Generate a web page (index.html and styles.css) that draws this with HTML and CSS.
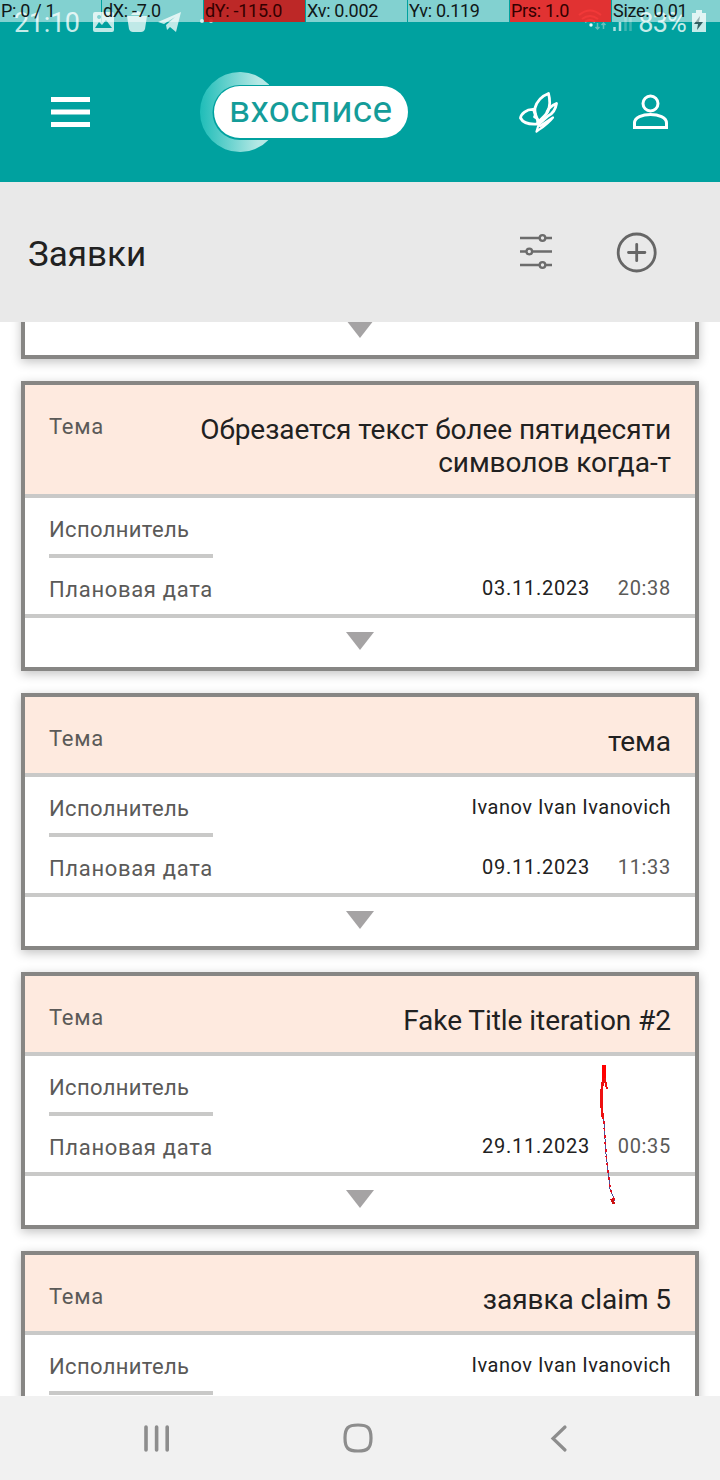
FILE: index.html
```html
<!DOCTYPE html>
<html lang="ru">
<head>
<meta charset="utf-8">
<title>Заявки</title>
<link rel="stylesheet" href="styles.css">
</head>
<body>
<div class="screen">
  <header class="top">
    <div class="status">
      <span class="clock">21:10</span>
      <svg class="status-left" width="130" height="40" viewBox="0 0 130 40" fill="#c0e9e7">
        <path fill-rule="evenodd" d="M5 12h17q2 0 2 2v16q0 2-2 2H5q-2 0-2-2V14q0-2 2-2zM5 28h17l-6-8-4 5-3-3zM9 15a2 2 0 1 0 .1 0z"/>
        <path d="M37 16h20l-2 13q-1 3-4 3h-8q-3 0-4-3zM41 15q6-8 12 0z"/>
        <path d="M68 22l23-10-5 20-6-5-3 3-1-5 9-8-11 7z"/>
        <circle cx="112" cy="21" r="2"/><circle cx="121" cy="21" r="2"/>
      </svg>
      <svg class="status-right" width="56" height="40" viewBox="0 0 56 40" fill="none" stroke="#ace0df" stroke-width="2.5">
        <path d="M2 15q11-9 22 0M5 19q8-6 16 0M8 22q5-4 10 0" stroke-width="2"/><circle cx="14" cy="25" r="1.7" fill="#e5ffff" stroke="none"/>
        <path d="M20.500 23v6m-2-2 2 2 2-2M26.500 29v-6m-2 2 2-2 2 2" stroke="#65c1bd" stroke-width="1.500"/>
        <path d="M37.500 31v-4M43 31v-9"/><path d="M48.500 31V16M53.500 31V12" stroke="#40b5b2"/>
      </svg>
      <span class="percent">83%</span>
      <svg class="battery" width="16" height="40" viewBox="0 0 16 40"><path d="M1 13h4v-3h6v3h4v19H1z" fill="#c5ebe9"/><path d="M9 16l-6 8h4l-1 6 6-8H8z" fill="#315f61"/></svg>
    </div>
    <div class="pointer-bar">
      <span class="cell">P: 0 / 1</span><span class="cell">dX: -7.0</span><span class="cell cell-dark">dY: -115.0</span><span class="cell">Xv: 0.002</span><span class="cell">Yv: 0.119</span><span class="cell cell-red">Prs: 1.0</span><span class="cell cell-last">Size: 0.01</span>
    </div>
    <nav class="appbar">
      <svg class="menu" width="40" height="32" viewBox="0 0 40 32" fill="#fff"><path d="M1 1h39v5H1zM1 13.500h39v5H1zM1 26h39v5H1z"/></svg>
      <svg class="logo" width="210" height="82" viewBox="0 0 210 82">
        <defs><linearGradient id="ring"><stop offset="0" stop-color="#1ebdb8"/><stop offset=".85" stop-color="#b5e8e5"/></linearGradient></defs>
        <path d="M69 13.500A40 40 0 1 0 69 68.500z" fill="url(#ring)"/>
        <rect x="12.500" y="14" width="190" height="55" rx="27.500" fill="#00a19f"/>
        <rect x="14" y="15" width="194" height="52" rx="26" fill="#fff"/>
        <text class="logo-text" x="29" y="51" textLength="163">вхосписе</text>
      </svg>
      <svg class="butterfly" width="42" height="44" viewBox="0 0 42 44" fill="none" stroke="#fff" stroke-width="2.800" stroke-linejoin="round" stroke-linecap="round">
        <path d="M20 32C20 29 16 24 17 18C19 11 24 6 30.500 3.500C32 9 32 16 30 21C28 25 25 28 20 32"/>
        <path d="M16 19.500C8 19 3 24 2.500 28C5 33 11 34.500 19 34C21 31 20 28 16.500 27C19 24 15 23 16 19.500"/>
        <path d="M29 22C31 17 35 15 38.500 13.500C37.500 20 34 24 30 26L21 34"/>
        <path d="M20 33L22 36L35 27.500C30 34 25 37 18.500 41.500L20.500 35" stroke-width="2.200"/>
      </svg>
      <svg class="person" width="38" height="38" viewBox="0 0 38 38" fill="none" stroke="#fff" stroke-width="3"><circle cx="18.500" cy="10.500" r="7.500"/><path d="M2.500 34.500V30C2.500 18.500 34.500 18.500 34.500 30v4.500z"/></svg>
    </nav>
  </header>
  <div class="titlebar">
    <h1 class="page-title">Заявки</h1>
    <svg class="filters" width="34" height="40" viewBox="0 0 34 40" fill="#e9e9e9" stroke="#6c6c6c"><path d="M1 6h32M1 19.500h32M1 33h32" stroke-width="2.500"/><g stroke-width="2.300"><circle cx="23.500" cy="6" r="2.800"/><circle cx="10.300" cy="19.500" r="2.800"/><circle cx="23.500" cy="33" r="2.800"/></g></svg>
    <svg class="add" width="42" height="40" viewBox="0 0 42 40" fill="none" stroke="#666" stroke-width="2.800"><circle cx="20.700" cy="20.500" r="18.500"/><path d="M20.700 12.300v16.400M12.500 20.500h16.400" stroke-linecap="round"/></svg>
  </div>
  <main class="list">
    <article class="card card-cut"><div class="expand"></div></article>
    <article class="card">
      <div class="subject"><span class="label topic">Тема</span><h2 class="subject-text">Обрезается текст более пятидесяти символов когда-т</h2></div>
      <div class="row"><span class="label">Исполнитель</span></div>
      <div class="rule"></div>
      <div class="row"><span class="label planned">Плановая дата</span><span class="value">03.11.2023</span><span class="time">20:38</span></div>
      <div class="expand"></div>
    </article>
    <article class="card">
      <div class="subject"><span class="label topic">Тема</span><h2 class="subject-text">тема</h2></div>
      <div class="row"><span class="label">Исполнитель</span><span class="value name">Ivanov Ivan Ivanovich</span></div>
      <div class="rule"></div>
      <div class="row"><span class="label planned">Плановая дата</span><span class="value">09.11.2023</span><span class="time">11:33</span></div>
      <div class="expand"></div>
    </article>
    <article class="card">
      <div class="subject"><span class="label topic">Тема</span><h2 class="subject-text">Fake Title iteration #2</h2></div>
      <div class="row"><span class="label">Исполнитель</span></div>
      <div class="rule"></div>
      <div class="row"><span class="label planned">Плановая дата</span><span class="value">29.11.2023</span><span class="time">00:35</span></div>
      <div class="expand"></div>
    </article>
    <article class="card">
      <div class="subject"><span class="label topic">Тема</span><h2 class="subject-text">заявка claim 5</h2></div>
      <div class="row"><span class="label">Исполнитель</span><span class="value name">Ivanov Ivan Ivanovich</span></div>
      <div class="rule"></div>
      <div class="row"></div>
    </article>
  </main>
  <footer class="navbar">
    <svg width="28" height="28" viewBox="0 0 28 28" stroke="#8d8d8d" stroke-width="3.600" stroke-linecap="round"><path d="M3 3v23M13.600 3v23M24.200 3v23"/></svg>
    <svg class="home" width="30" height="30" viewBox="0 0 30 30" fill="none" stroke="#8d8d8d" stroke-width="3.200"><path d="M15 2C25 2 28 5 28 15S25 28 15 28 2 25 2 15 5 2 15 2z"/></svg>
    <svg class="back" width="18" height="28" viewBox="0 0 18 28" fill="none" stroke="#8d8d8d" stroke-width="3.200" stroke-linecap="round"><path d="M15 3L3 14.500 15 26"/></svg>
  </footer>
  <svg class="trail" width="24" height="144" viewBox="0 0 24 144" fill="none" shape-rendering="crispEdges">
    <path d="M6.500 50L8 59 10 90 13 114 14 125 19 137" stroke="#4b5199"/>
    <path d="M6.500 50L8 59 10 90 13 114 14 125 19 137" stroke="#e01020" stroke-width="1.700" stroke-dasharray="3 4"/>
    <path d="M7 17L5.500 27 5.500 42 7 55" stroke="#e11" stroke-width="2.500"/><path d="M8 1V17" stroke="#f00" stroke-width="4"/><path d="M8.500 14L11 25" stroke="#e11" stroke-width="2"/><path d="M15.500 135L18 140" stroke="#c11" stroke-width="2.500"/>
  </svg>
</div>
</body>
</html>
```
FILE: styles.css
```css
* { box-sizing: border-box; }
body { margin: 0; font-family: Roboto, sans-serif; color: #212121; }
h1, h2 { margin: 0; font-weight: 400; }
svg { display: block; flex: none; overflow: visible; }
.screen { position: relative; width: 720px; height: 1480px; display: flex; flex-direction: column; overflow: hidden; background: #fff; }
.top { position: relative; height: 182px; flex: none; background: #00a19f; display: flex; flex-direction: column; }
.status { height: 42px; display: flex; padding: 0 13px 0 14px; color: #c5ebe9; font-size: 27px; line-height: 46px; }
.clock { width: 76px; letter-spacing: -.3px; }
.status-right { margin-left: 357px; }
.percent { width: 53px; text-align: right; letter-spacing: -.8px; }
.battery { margin-left: auto; }
.pointer-bar { position: absolute; top: 0; left: 0; width: 720px; height: 22px; display: flex; gap: 1px; font-size: 18px; line-height: 22px; color: #101818; letter-spacing: -.3px; }
.cell { width: 101px; flex: none; padding-left: 1px; white-space: nowrap; background: rgba(255, 255, 255, .51); }
.cell-dark { background: rgba(208, 28, 28, .91); color: #300; }
.cell-red { background: rgba(250, 38, 38, .9); color: #300; }
.cell-last { width: 108px; }
.appbar { height: 140px; display: flex; align-items: center; padding: 0 50px; }
.logo { margin-left: 110px; }
.logo-text { font: 37px Roboto, sans-serif; fill: #149c99; }
.butterfly { margin-left: 108px; }
.person { margin-left: auto; }
.titlebar { height: 140px; flex: none; display: flex; align-items: center; background: #e9e9e9; padding: 0 62px 0 28px; }
.page-title { font-size: 35px; line-height: 44px; padding-top: 6px; }
.filters { margin-left: auto; }
.add { margin-left: 63px; }
.list { height: 1074px; flex: none; overflow: hidden; padding: 0 21px; display: flex; flex-direction: column; gap: 22px; }
.card { flex: none; border: 4px solid #878684; background: #fff; box-shadow: 0 3px 10px rgba(0, 0, 0, .24); }
.card-cut { height: 57px; margin-top: -20px; border-top: 0; }
.card-cut .expand { border: 0; height: 53px; padding-top: 18px; }
.subject { display: flex; justify-content: space-between; background: #feeadf; border-bottom: 4px solid #c9c9c8; padding: 28px 24px 15px; }
.label { color: #5b5a58; font-size: 22px; line-height: 27px; letter-spacing: .35px; }
.topic { letter-spacing: .7px; }
.planned { letter-spacing: .67px; }
.subject-text { width: 490px; text-align: right; font-size: 28px; line-height: 33px; letter-spacing: -.05px; }
.row { height: 56px; display: flex; padding: 18px 24px 0; }
.rule { width: 164px; height: 4px; margin-left: 24px; background: #c9c9c8; }
.value { margin-left: auto; font-size: 20px; line-height: 24px; letter-spacing: .75px; }
.name { letter-spacing: .5px; }
.time { width: 81px; text-align: right; font-size: 20px; line-height: 24px; letter-spacing: .7px; color: #5b5a58; }
.expand { height: 53px; border-top: 4px solid #c9c9c8; padding-top: 14px; }
.expand::after { content: ""; display: block; width: 28px; height: 18px; margin: 0 auto; background: #a5a3a4; clip-path: polygon(0 0, 100% 0, 50% 100%); }
.navbar { height: 84px; flex: none; background: #f1f1f1; display: flex; align-items: center; padding: 0 152px 0 143px; }
.home { margin-left: 172px; }
.back { margin-left: auto; }
.trail { position: absolute; left: 596px; top: 1064px; }
```
